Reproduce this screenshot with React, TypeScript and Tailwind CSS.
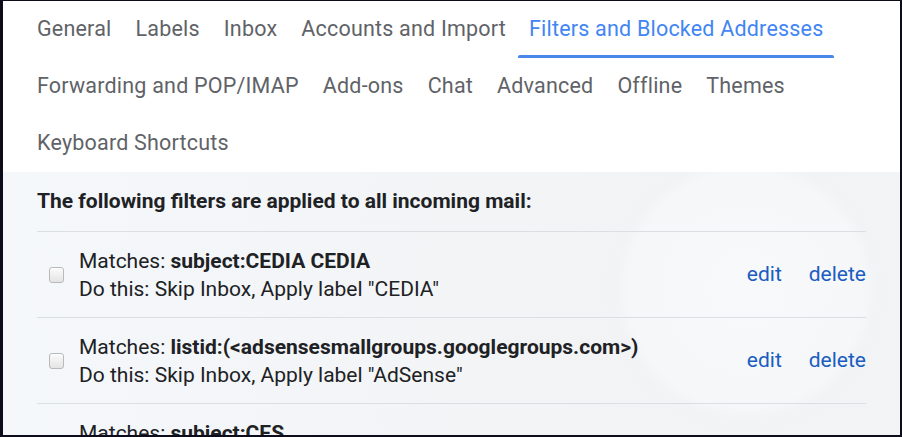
const tabRows: string[][] = [
  ["General", "Labels", "Inbox", "Accounts and Import", "Filters and Blocked Addresses"],
  ["Forwarding and POP/IMAP", "Add-ons", "Chat", "Advanced", "Offline", "Themes"],
  ["Keyboard Shortcuts"],
];

const ACTIVE = "Filters and Blocked Addresses";

const filters = [
  { match: "subject:CEDIA CEDIA", action: 'Skip Inbox, Apply label "CEDIA"' },
  { match: "listid:(<adsensesmallgroups.googlegroups.com>)", action: 'Skip Inbox, Apply label "AdSense"' },
  { match: "subject:CES", action: 'Skip Inbox, Apply label "CES"' },
];

function Checkbox() {
  return (
    <div className="h-[16px] w-[15px] shrink-0 rounded-[3px] border border-[#b9b9b9] bg-gradient-to-b from-[#fbfbfb] to-[#e4e4e4] shadow-[inset_0_1px_0_#fff]" />
  );
}

export default function App() {
  return (
    <div
      className="flex h-[437px] w-[902px] flex-col overflow-hidden border-t border-r-2 border-b-2 border-l-[3px] border-[#0c0c1a] bg-white"
      style={{ fontFamily: "Roboto, 'Liberation Sans', sans-serif" }}
    >
      <div className="bg-white pl-[22px]">
        {tabRows.map((row, i) => (
          <div key={i} className="flex h-[57px]">
            {row.map((t) => {
              const active = t === ACTIVE;
              return (
                <div
                  key={t}
                  className={
                    active
                      ? "relative flex items-center px-[11px] text-[21.5px] tracking-[0.2px] text-[#4285f4]"
                      : "relative flex items-center px-3 text-[21.5px] tracking-[0.2px] text-[#5f6368]"
                  }
                >
                  {t}
                  {active && (
                    <div className="absolute right-0 bottom-0 left-0 h-[3px] rounded-t-[2px] bg-[#4a86e8]" />
                  )}
                </div>
              );
            })}
          </div>
        ))}
      </div>

      <div className="flex-1 bg-[#f1f3f4] bg-[radial-gradient(circle_at_743px_118px,#f7f9fb_0,#f5f7f9_118px,#f1f3f5_130px,#f2f4f6_300px,#f5f8fb_100%)] px-[34px]">
        <div className="flex h-[59px] items-center text-[21px] font-bold text-[#202124]">
          The following filters are applied to all incoming mail:
        </div>
        {filters.map((f) => (
          <div
            key={f.match}
            className="flex h-[86px] items-center border-t border-[#dcdfe2] pl-3 text-[21px] text-[#202124]"
          >
            <Checkbox />
            <div className="ml-[15px] flex flex-1 flex-col leading-[28px]">
              <div>
                Matches: <span className="font-bold">{f.match}</span>
              </div>
              <div>Do this: {f.action}</div>
            </div>
            <div className="flex gap-[27px] text-[21px] text-[#1a5dc1]">
              <span>edit</span>
              <span>delete</span>
            </div>
          </div>
        ))}
      </div>
    </div>
  );
}
